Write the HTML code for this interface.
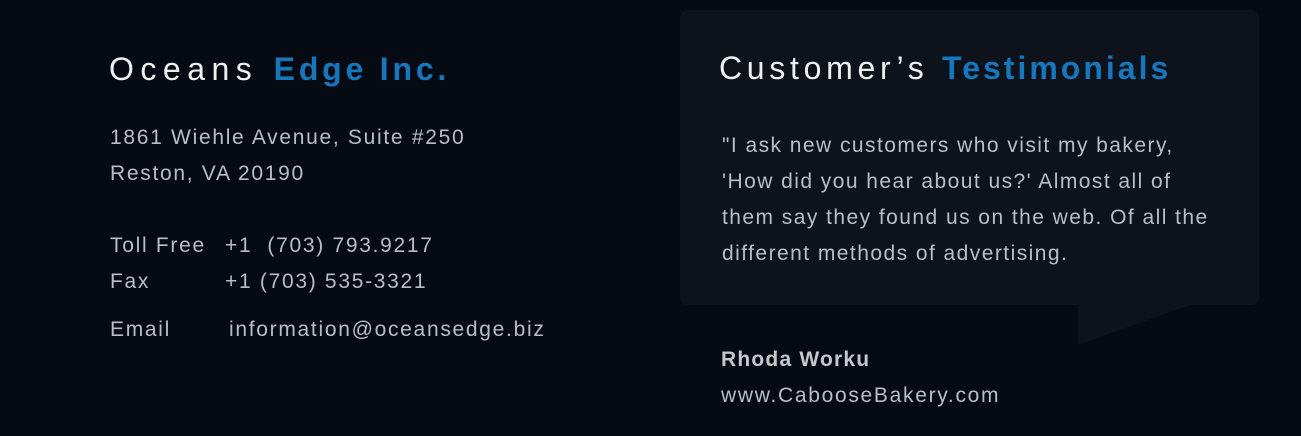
<!DOCTYPE html>
<html><head><style>
html,body{margin:0;padding:0;}
body{width:1301px;height:436px;background:#060a13;position:relative;overflow:hidden;font-family:"Liberation Sans",sans-serif;color:#b9bdc4;}
.a{position:absolute;white-space:nowrap;}
h2{margin:0;font-weight:normal;font-size:32px;color:#eef0f2;letter-spacing:6.5px;position:absolute;white-space:nowrap;}
h2 b{color:#1677bd;font-weight:bold;letter-spacing:3.8px;}
.t{font-size:21px;letter-spacing:1.7px;}
.box{position:absolute;left:680px;top:10px;width:579px;height:295px;background:#0e121b;border-radius:8px;}
</style></head><body>
<h2 style="left:109px;top:51px;">Oceans <b>Edge Inc.</b></h2>
<div class="a t" style="left:110px;top:126px;">1861 Wiehle Avenue, Suite #250</div>
<div class="a t" style="left:110px;top:162px;">Reston, VA 20190</div>
<div class="a t" style="left:110px;top:234px;">Toll Free</div>
<div class="a t" style="left:225px;top:234px;">+1&nbsp; (703) 793.9217</div>
<div class="a t" style="left:110px;top:270px;">Fax</div>
<div class="a t" style="left:225px;top:270px;">+1 (703) 535-3321</div>
<div class="a t" style="left:110px;top:318px;">Email</div>
<div class="a t" style="left:229px;top:318px;">information@oceansedge.biz</div>
<div class="box"></div>
<svg class="a" style="left:1070px;top:300px" width="130" height="50"><polygon points="8,5 120,5 8,45" fill="#0e121b"/></svg>
<h2 style="left:719px;top:50px;letter-spacing:4.7px;">Customer’s <b style="letter-spacing:3px">Testimonials</b></h2>
<div class="a t" style="left:722px;top:128px;line-height:36px;white-space:normal;width:540px;letter-spacing:1.45px;">"I ask new customers who visit my bakery,<br>'How did you hear about us?' Almost all of<br>them say they found us on the web. Of all the<br>different methods of advertising.</div>
<div class="a t" style="left:721px;top:348px;font-weight:bold;color:#c4c7cc;letter-spacing:1.2px;">Rhoda Worku</div>
<div class="a t" style="left:721px;top:384px;">www.CabooseBakery.com</div>
</body></html>
